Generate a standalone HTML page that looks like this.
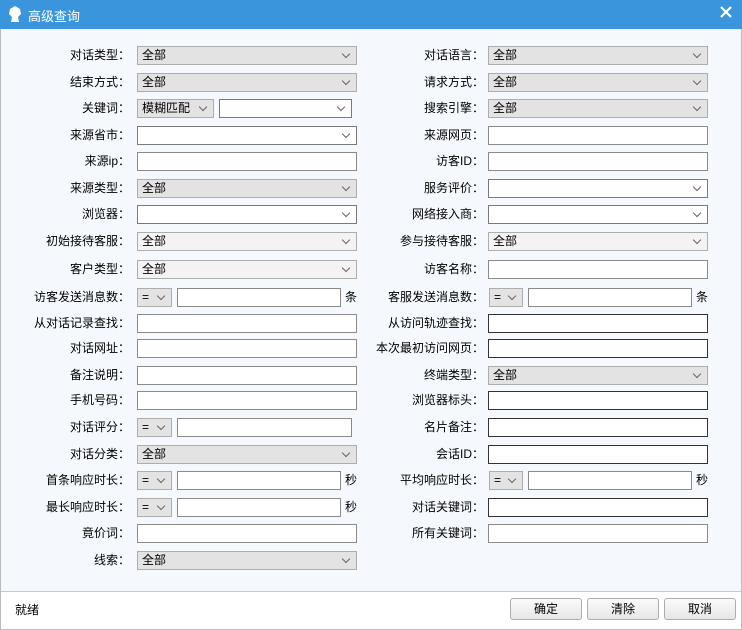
<!DOCTYPE html>
<html><head><meta charset="utf-8"><style>
*{box-sizing:border-box;margin:0;padding:0}
body{width:742px;height:630px;overflow:hidden;background:#fff;font-family:"Liberation Sans","Noto Sans CJK SC",sans-serif;font-size:12px;color:#000;position:relative}
.tb{position:absolute;left:0;top:0;width:742px;height:29px;background:#3a95dd;color:#fff;font-size:13px}
.tb span{position:absolute;left:28px;top:6px}
.body{position:absolute;left:0;top:29px;width:742px;height:562px;background:#f5f9fd;border-left:1px solid #bbb;border-right:1px solid #bbb}
.ft{position:absolute;left:0;top:591px;width:742px;height:39px;background:#fff;border-top:1px solid #c8c8c8;border-left:1px solid #bbb;border-right:1px solid #bbb;border-bottom:1px solid #bbb}
.l{position:absolute;text-align:right;white-space:nowrap;line-height:19px;height:19px}
.ll{left:0;width:130px}.rl{left:360px;width:124px}
.c{position:absolute;height:19px;line-height:17px;padding-left:4px;white-space:nowrap}
.s{background:#e3e3e3;border:1px solid #adadad}
.w{background:#fff;border:1px solid #7a7a7a}
.i{background:#fff;border:1px solid #8a8a8a}
.d{background:#fff;border:1px solid #333}
.ar::after{content:"";position:absolute;right:7px;top:4px;width:5px;height:5px;border-right:1px solid #666;border-bottom:1px solid #666;transform:rotate(45deg)}
.u{position:absolute;line-height:19px}
.b{position:absolute;top:598px;height:22px;width:72px;border:1px solid #adadad;border-radius:3px;background:linear-gradient(#fbfbfb,#e6e6e6);text-align:center;line-height:20px}
</style></head><body>
<div class="tb"><svg style="position:absolute;left:6px;top:5px" width="18" height="18" viewBox="0 0 18 18"><path d="M4 4 L9 1 L14 4 L15 9 L12 12 L13 17 L5 17 L6 12 L3 9 Z" fill="#fff"/></svg><span>高级查询</span>
<svg style="position:absolute;left:720px;top:6px" width="12" height="12" viewBox="0 0 12 12"><path d="M1 1 L11 11 M11 1 L1 11" stroke="#fff" stroke-width="2.2"/></svg></div>
<div class="body"></div>
<div class="ft"><span style="position:absolute;left:14px;top:9px">就绪</span></div>
<div class="b" style="left:510px">确定</div>
<div class="b" style="left:587px">清除</div>
<div class="b" style="left:664px">取消</div>

<div class="l ll" style="top:46px">对话类型：</div><div class="c s ar" style="left:137px;top:46px;width:220px">全部</div>
<div class="l ll" style="top:73px">结束方式：</div><div class="c s ar" style="left:137px;top:73px;width:220px">全部</div>
<div class="l ll" style="top:99px">关键词：</div><div class="c s ar" style="left:137px;top:99px;width:77px">模糊匹配</div><div class="c w ar" style="left:219px;top:99px;width:133px"></div>
<div class="l ll" style="top:126px">来源省市：</div><div class="c w ar" style="left:137px;top:126px;width:220px"></div>
<div class="l ll" style="top:152px">来源ip：</div><div class="c i" style="left:137px;top:152px;width:220px"></div>
<div class="l ll" style="top:179px">来源类型：</div><div class="c s ar" style="left:137px;top:179px;width:220px">全部</div>
<div class="l ll" style="top:205px">浏览器：</div><div class="c w ar" style="left:137px;top:205px;width:220px"></div>
<div class="l ll" style="top:232px">初始接待客服：</div><div class="c s ar" style="left:137px;top:232px;width:220px;background:#f3f3f3">全部</div>
<div class="l ll" style="top:260px">客户类型：</div><div class="c s ar" style="left:137px;top:260px;width:220px;background:#f3f3f3">全部</div>
<div class="l ll" style="top:288px">访客发送消息数：</div><div class="c s ar" style="left:137px;top:288px;width:35px">=</div><div class="c i" style="left:177px;top:288px;width:164px"></div><div class="u" style="left:345px;top:288px">条</div>
<div class="l ll" style="top:314px">从对话记录查找：</div><div class="c i" style="left:137px;top:314px;width:220px"></div>
<div class="l ll" style="top:339px">对话网址：</div><div class="c i" style="left:137px;top:339px;width:220px"></div>
<div class="l ll" style="top:366px">备注说明：</div><div class="c i" style="left:137px;top:366px;width:220px"></div>
<div class="l ll" style="top:391px">手机号码：</div><div class="c i" style="left:137px;top:391px;width:220px"></div>
<div class="l ll" style="top:418px">对话评分：</div><div class="c s ar" style="left:137px;top:418px;width:35px">=</div><div class="c i" style="left:177px;top:418px;width:175px"></div>
<div class="l ll" style="top:445px">对话分类：</div><div class="c s ar" style="left:137px;top:445px;width:220px">全部</div>
<div class="l ll" style="top:471px">首条响应时长：</div><div class="c s ar" style="left:137px;top:471px;width:35px">=</div><div class="c i" style="left:177px;top:471px;width:164px"></div><div class="u" style="left:345px;top:471px">秒</div>
<div class="l ll" style="top:498px">最长响应时长：</div><div class="c s ar" style="left:137px;top:498px;width:35px">=</div><div class="c i" style="left:177px;top:498px;width:164px"></div><div class="u" style="left:345px;top:498px">秒</div>
<div class="l ll" style="top:524px">竟价词：</div><div class="c i" style="left:137px;top:524px;width:220px"></div>
<div class="l ll" style="top:551px">线索：</div><div class="c s ar" style="left:137px;top:551px;width:220px">全部</div>

<div class="l rl" style="top:46px">对话语言：</div><div class="c s ar" style="left:488px;top:46px;width:220px">全部</div>
<div class="l rl" style="top:73px">请求方式：</div><div class="c s ar" style="left:488px;top:73px;width:220px">全部</div>
<div class="l rl" style="top:99px">搜索引擎：</div><div class="c s ar" style="left:488px;top:99px;width:220px">全部</div>
<div class="l rl" style="top:126px">来源网页：</div><div class="c i" style="left:488px;top:126px;width:220px"></div>
<div class="l rl" style="top:152px">访客ID：</div><div class="c i" style="left:488px;top:152px;width:220px"></div>
<div class="l rl" style="top:179px">服务评价：</div><div class="c w ar" style="left:488px;top:179px;width:220px"></div>
<div class="l rl" style="top:205px">网络接入商：</div><div class="c w ar" style="left:488px;top:205px;width:220px"></div>
<div class="l rl" style="top:232px">参与接待客服：</div><div class="c s ar" style="left:488px;top:232px;width:220px;background:#f3f3f3">全部</div>
<div class="l rl" style="top:260px">访客名称：</div><div class="c i" style="left:488px;top:260px;width:220px"></div>
<div class="l rl" style="top:288px">客服发送消息数：</div><div class="c s ar" style="left:489px;top:288px;width:34px">=</div><div class="c i" style="left:528px;top:288px;width:164px"></div><div class="u" style="left:696px;top:288px">条</div>
<div class="l rl" style="top:314px">从访问轨迹查找：</div><div class="c d" style="left:488px;top:314px;width:220px"></div>
<div class="l rl" style="top:339px">本次最初访问网页：</div><div class="c d" style="left:488px;top:339px;width:220px"></div>
<div class="l rl" style="top:366px">终端类型：</div><div class="c s ar" style="left:488px;top:366px;width:220px">全部</div>
<div class="l rl" style="top:391px">浏览器标头：</div><div class="c d" style="left:488px;top:391px;width:220px"></div>
<div class="l rl" style="top:418px">名片备注：</div><div class="c d" style="left:488px;top:418px;width:220px"></div>
<div class="l rl" style="top:445px">会话ID：</div><div class="c d" style="left:488px;top:445px;width:220px"></div>
<div class="l rl" style="top:471px">平均响应时长：</div><div class="c s ar" style="left:489px;top:471px;width:34px">=</div><div class="c i" style="left:528px;top:471px;width:164px"></div><div class="u" style="left:696px;top:471px">秒</div>
<div class="l rl" style="top:498px">对话关键词：</div><div class="c d" style="left:488px;top:498px;width:220px"></div>
<div class="l rl" style="top:524px">所有关键词：</div><div class="c i" style="left:488px;top:524px;width:220px"></div>
</body></html>
